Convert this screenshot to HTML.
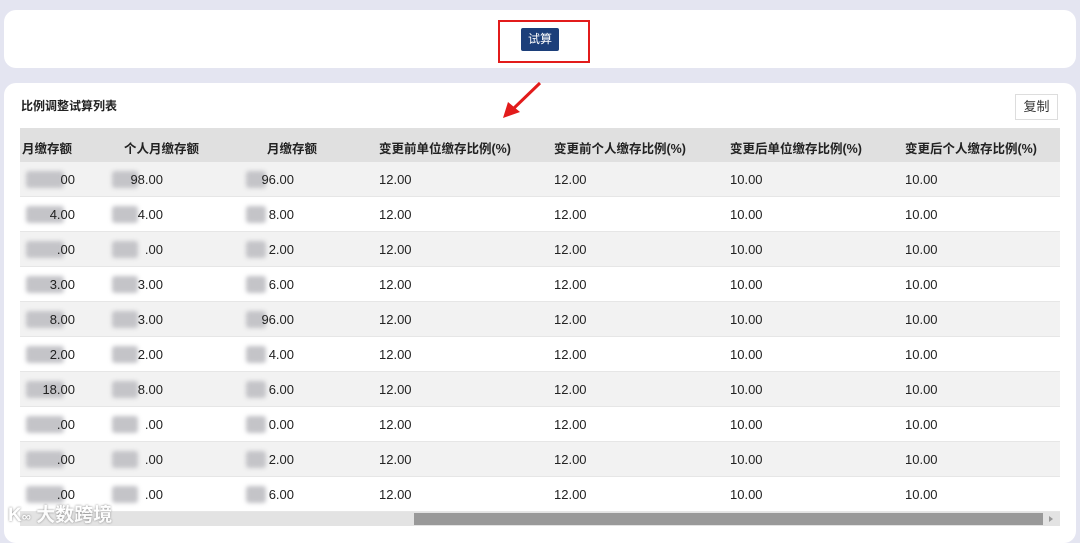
<!DOCTYPE html>
<html><head><meta charset="utf-8"><style>
*{margin:0;padding:0;box-sizing:border-box}
body{width:1080px;height:532px;background:#e4e5f1;font-family:"Liberation Sans","Noto Sans CJK SC",sans-serif;position:relative;overflow:hidden;color:#222}
.card{position:absolute;background:#fff;border-radius:12px}
.btn{position:absolute;left:521px;top:28px;width:38px;height:23px;background:#1c3f7a;color:#fff;font-size:12px;line-height:23px;text-align:center;border-radius:2px}
.red{position:absolute;left:498px;top:20px;width:92px;height:43px;border:2px solid #e21b1b}
.title{position:absolute;left:21px;top:97px;font-size:12px;font-weight:bold;color:#222}
.copy{position:absolute;left:1015px;top:94px;width:43px;height:26px;border:1px solid #ddd;font-size:13px;line-height:24px;text-align:center;color:#333;background:#fff}
.thead{position:absolute;left:20px;top:128px;width:1040px;height:34px;background:#e0e0e0}
.row{position:absolute;left:20px;width:1040px;height:35px;border-bottom:1px solid #e6e6e6}
.t{position:absolute;font-size:13px;white-space:nowrap}
.h{font-weight:bold;font-size:12.5px;color:#222}
.blur{position:absolute;background:#c4c4c8;filter:blur(2px);border-radius:3px}
</style></head><body>
<div class="card" style="left:4px;top:10px;width:1072px;height:58px"></div>
<div class="btn">试算</div>
<div class="red"></div>
<div class="card" style="left:4px;top:83px;width:1072px;height:460px"></div>
<svg style="position:absolute;left:500px;top:80px" width="45" height="40"><line x1="40" y1="3" x2="12" y2="30" stroke="#e21b1b" stroke-width="3"/><polygon points="3,38 8,22 20,32" fill="#e21b1b"/></svg>
<div class="title">比例调整试算列表</div>
<div class="copy">复制</div>
<div class="thead"></div>
<div class="t h" style="left:22px;top:138px">月缴存额</div>
<div class="t h" style="left:124px;top:138px">个人月缴存额</div>
<div class="t h" style="left:267px;top:138px">月缴存额</div>
<div class="t h" style="left:379px;top:138px">变更前单位缴存比例(%)</div>
<div class="t h" style="left:554px;top:138px">变更前个人缴存比例(%)</div>
<div class="t h" style="left:730px;top:138px">变更后单位缴存比例(%)</div>
<div class="t h" style="left:905px;top:138px">变更后个人缴存比例(%)</div>
<div id="rows"></div>
<div style="position:absolute;left:20px;top:512px;width:1040px;height:14px;background:#e3e3e3"></div>
<div style="position:absolute;left:414px;top:513px;width:629px;height:12px;background:#999"></div>
<div style="position:absolute;left:1049px;top:516px;width:0;height:0;border-left:4px solid #999;border-top:3px solid transparent;border-bottom:3px solid transparent"></div>
<div style="position:absolute;left:8px;top:500px;font-size:19px;color:#fff;font-weight:bold;text-shadow:0 0 2px #777;opacity:.9">K<span style="font-size:13px">∞</span> 大数跨境</div>
<script>
var a=["00","4.00",".00","3.00","8.00","2.00","18.00",".00",".00",".00"],
b=["98.00","4.00",".00","3.00","3.00","2.00","8.00",".00",".00",".00"],
c=["96.00","8.00","2.00","6.00","96.00","4.00","6.00","0.00","2.00","6.00"],h="";
for(var i=0;i<10;i++){var y=162+i*35,ty=y+10;
h+='<div class="row" style="top:'+y+'px;background:'+(i%2?'#fff':'#f2f2f2')+'"></div>';
h+='<div class="blur" style="left:26px;top:'+(y+9)+'px;width:38px;height:17px"></div>';
h+='<div class="blur" style="left:112px;top:'+(y+9)+'px;width:26px;height:17px"></div>';
h+='<div class="blur" style="left:246px;top:'+(y+9)+'px;width:20px;height:17px"></div>';
h+='<div class="t" style="right:1005px;top:'+ty+'px">'+a[i]+'</div>';
h+='<div class="t" style="right:917px;top:'+ty+'px">'+b[i]+'</div>';
h+='<div class="t" style="right:786px;top:'+ty+'px">'+c[i]+'</div>';
h+='<div class="t" style="left:379px;top:'+ty+'px">12.00</div><div class="t" style="left:554px;top:'+ty+'px">12.00</div><div class="t" style="left:730px;top:'+ty+'px">10.00</div><div class="t" style="left:905px;top:'+ty+'px">10.00</div>';}
document.getElementById('rows').innerHTML=h;
</script>
</body></html>
